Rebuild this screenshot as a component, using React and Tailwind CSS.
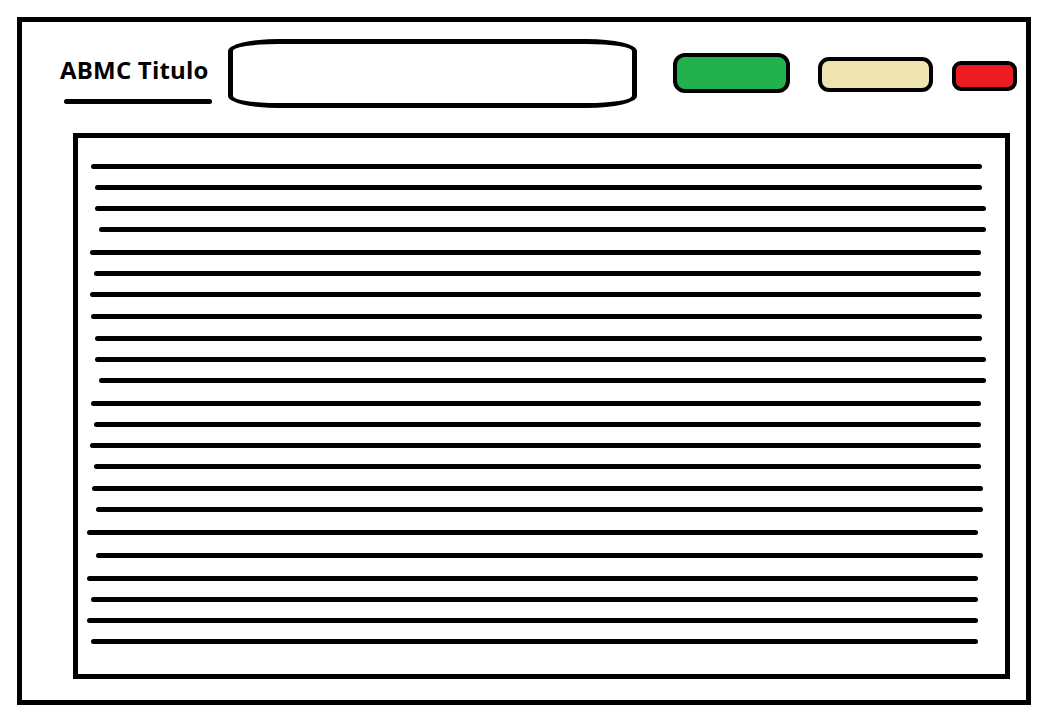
import React from "react";

const lines = [
  "mt-[26px] ml-[13px] w-[891px]",
  "mt-[16px] ml-[17px] w-[887px]",
  "mt-[16px] ml-[17px] w-[891px]",
  "mt-[16px] ml-[21px] w-[887px]",
  "mt-[18px] ml-[12px] w-[891px]",
  "mt-[16px] ml-[16px] w-[887px]",
  "mt-[16px] ml-[12px] w-[891px]",
  "mt-[17px] ml-[13px] w-[891px]",
  "mt-[17px] ml-[17px] w-[887px]",
  "mt-[16px] ml-[17px] w-[891px]",
  "mt-[16px] ml-[21px] w-[887px]",
  "mt-[18px] ml-[13px] w-[890px]",
  "mt-[16px] ml-[16px] w-[887px]",
  "mt-[16px] ml-[12px] w-[891px]",
  "mt-[16px] ml-[16px] w-[887px]",
  "mt-[17px] ml-[14px] w-[891px]",
  "mt-[16px] ml-[18px] w-[887px]",
  "mt-[18px] ml-[9px] w-[891px]",
  "mt-[18px] ml-[18px] w-[887px]",
  "mt-[18px] ml-[9px] w-[891px]",
  "mt-[16px] ml-[13px] w-[887px]",
  "mt-[16px] ml-[9px] w-[891px]",
  "mt-[16px] ml-[13px] w-[887px]",
];

export default function App() {
  return (
    <div className="w-[1049px] h-[726px] bg-white pt-[17px] pl-[17px] box-border">
      <div className="box-border w-[1014px] h-[688px] border-[5px] border-black bg-white">
        {/* header */}
        <div className="flex items-start h-[86px]">
          <div className="ml-[38px] mt-[32px] w-[168px] flex flex-col">
            <span className="font-['Open_Sans'] font-bold text-[24px] leading-[32px] text-black tracking-[0.2px]">
              ABMC Titulo
            </span>
            <div className="mt-[13px] ml-[4px] w-[148px] h-[5px] rounded-full bg-black" />
          </div>
          <div className="box-border mt-[17px] w-[409px] h-[69px] border-[5px] border-black rounded-[50px/12px] bg-white" />
          <div className="box-border ml-[36px] mt-[31px] w-[117px] h-[40px] border-[4px] border-black rounded-[12px] bg-[#22b14c]" />
          <div className="box-border ml-[28px] mt-[35px] w-[115px] h-[35px] border-[4px] border-black rounded-[11px] bg-[#efe4b0]" />
          <div className="box-border ml-[19px] mt-[39px] w-[65px] h-[30px] border-[4px] border-black rounded-[9px] bg-[#ed1c24]" />
        </div>
        {/* content box */}
        <div className="box-border ml-[51px] mt-[25px] w-[937px] h-[546px] border-[5px] border-black flex flex-col">
          {lines.map((c, i) => (
            <div key={i} className={`${c} h-[5px] rounded-full bg-black shrink-0`} />
          ))}
        </div>
      </div>
    </div>
  );
}
